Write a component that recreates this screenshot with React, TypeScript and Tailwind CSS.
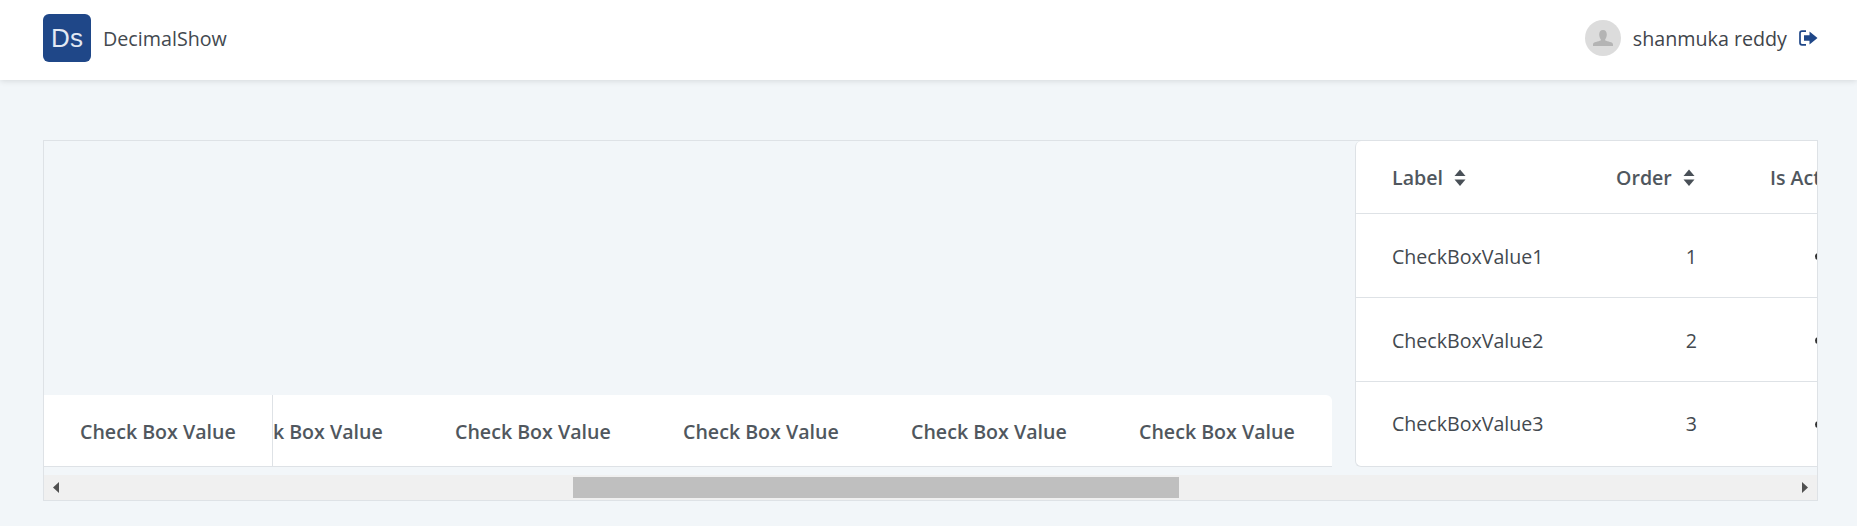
const rows = [
  { label: "CheckBoxValue1", order: 1 },
  { label: "CheckBoxValue2", order: 2 },
  { label: "CheckBoxValue3", order: 3 },
];

function SortIcon() {
  return (
    <svg width="12" height="18" viewBox="0 0 12 18" className="ml-[11px] shrink-0 fill-[#495057]">
      <path d="M6 0.5 L11.5 7 H0.5 Z" />
      <path d="M0.5 10.5 H11.5 L6 17 Z" />
    </svg>
  );
}

function SignOutIcon() {
  return (
    <svg width="19" height="16" viewBox="0 0 19 16" className="ml-[12px]">
      <path d="M7 1.2 H3 Q1 1.2 1 3.2 V12.8 Q1 14.8 3 14.8 H7" fill="none" stroke="#1f4788" strokeWidth="1.7" />
      <path d="M5 5.2 H10.5 V1.5 L18.5 8 L10.5 14.5 V10.8 H5 Z" fill="#1f4788" />
    </svg>
  );
}

function AvatarIcon() {
  return (
    <svg width="20" height="16" viewBox="0 0 20 16" className="fill-[#b4b4b4]">
      <path d="M10 0 C12.6 0 13.8 1.9 13.8 4.4 C13.8 6.6 13 8.2 12.2 9.2 V10.6 C14.5 11.6 20 12 20 14.4 V16 H0 V14.4 C0 12 5.5 11.6 7.8 10.6 V9.2 C7 8.2 6.2 6.6 6.2 4.4 C6.2 1.9 7.4 0 10 0 Z" />
    </svg>
  );
}

function ScrollArrow({ dir }: { dir: "left" | "right" }) {
  return (
    <svg width="6" height="11" viewBox="0 0 6 11" className="fill-[#505050]">
      {dir === "left" ? <path d="M6 0 V11 L0 5.5 Z" /> : <path d="M0 0 V11 L6 5.5 Z" />}
    </svg>
  );
}

function CheckCell({ className = "" }: { className?: string }) {
  return (
    <div className={`w-[228px] shrink-0 pl-[36px] pt-[3px] flex items-center text-[19.6px] font-semibold text-[#50575e] whitespace-nowrap ${className}`}>
      Check Box Value
    </div>
  );
}

export default function App() {
  return (
    <div className="w-[1857px] h-[526px] overflow-hidden bg-[#f2f6f9] font-['Open_Sans','Noto_Sans',sans-serif]">
      {/* top bar */}
      <header className="h-[80px] pb-[4px] bg-white shadow-[0_1px_6px_rgba(0,0,0,0.12)] flex items-center justify-between pl-[43px] pr-[39px] relative">
        <div className="flex items-center">
          <div className="w-[48px] h-[48px] rounded-[6px] bg-[#1f4788] flex items-center justify-center text-[26px] text-[#e3e9f3] font-['Liberation_Sans',sans-serif]">
            Ds
          </div>
          <span className="ml-[12px] pt-[2px] text-[19.7px] text-[#43494f]">DecimalShow</span>
        </div>
        <div className="flex items-center">
          <div className="w-[36px] h-[36px] rounded-full bg-[#dcdcdc] flex items-center justify-center">
            <AvatarIcon />
          </div>
          <span className="ml-[12px] pt-[2px] text-[19.7px] text-[#3f454b]">shanmuka reddy</span>
          <SignOutIcon />
        </div>
      </header>

      <main className="pl-[43px] pr-[39px] pt-[60px]">
        <div className="h-[361px] border border-[#dee2e6] flex flex-col">
          <div className="h-[326px] flex">
            {/* left grid, only the bottom row is drawn */}
            <div className="w-[1288px] flex flex-col justify-end">
              <div className="h-[72px] bg-white border-b border-[#dee2e6] rounded-tr-[6px] flex overflow-hidden">
                <CheckCell className="w-[229px] border-r border-[#dee2e6]" />
                <div className="flex-1 overflow-hidden">
                  <div className="flex h-full -ml-[82px]">
                    <CheckCell />
                    <CheckCell />
                    <CheckCell />
                    <CheckCell />
                    <CheckCell />
                  </div>
                </div>
              </div>
            </div>

            {/* label table */}
            <div className="ml-[23px] flex-1 bg-white border-l border-b border-[#dee2e6] rounded-l-[6px] overflow-hidden text-[19.6px]">
              <div className="h-[73px] pt-[2px] border-b border-[#dee2e6] flex items-center font-semibold text-[#50575e] whitespace-nowrap">
                <div className="w-[224px] shrink-0 pl-[36px] flex items-center">Label<SortIcon /></div>
                <div className="w-[115px] shrink-0 pl-[36px] flex items-center">Order<SortIcon /></div>
                <div className="pl-[75px] shrink-0">Is Active</div>
              </div>
              {rows.map((r, i) => (
                <div key={r.label} className={`h-[84px] flex items-center text-[#43494f] whitespace-nowrap ${i < 2 ? "border-b border-[#dee2e6] pt-[2px]" : ""}`}>
                  <div className="w-[225px] shrink-0 pl-[36px]">{r.label}</div>
                  <div className="w-[116px] shrink-0 text-right">{r.order}</div>
                  <div className="ml-[118px] w-[7px] h-[7px] shrink-0 rounded-full bg-[#333]" />
                </div>
              ))}
            </div>
          </div>

          {/* horizontal scrollbar */}
          <div className="mt-[8px] h-[25px] bg-[#f0f0f0] flex items-center relative px-[9px] justify-between">
            <ScrollArrow dir="left" />
            <div className="absolute left-[529px] top-[2px] w-[606px] h-[21px] bg-[#bfbfbf]" />
            <ScrollArrow dir="right" />
          </div>
        </div>
      </main>
    </div>
  );
}
